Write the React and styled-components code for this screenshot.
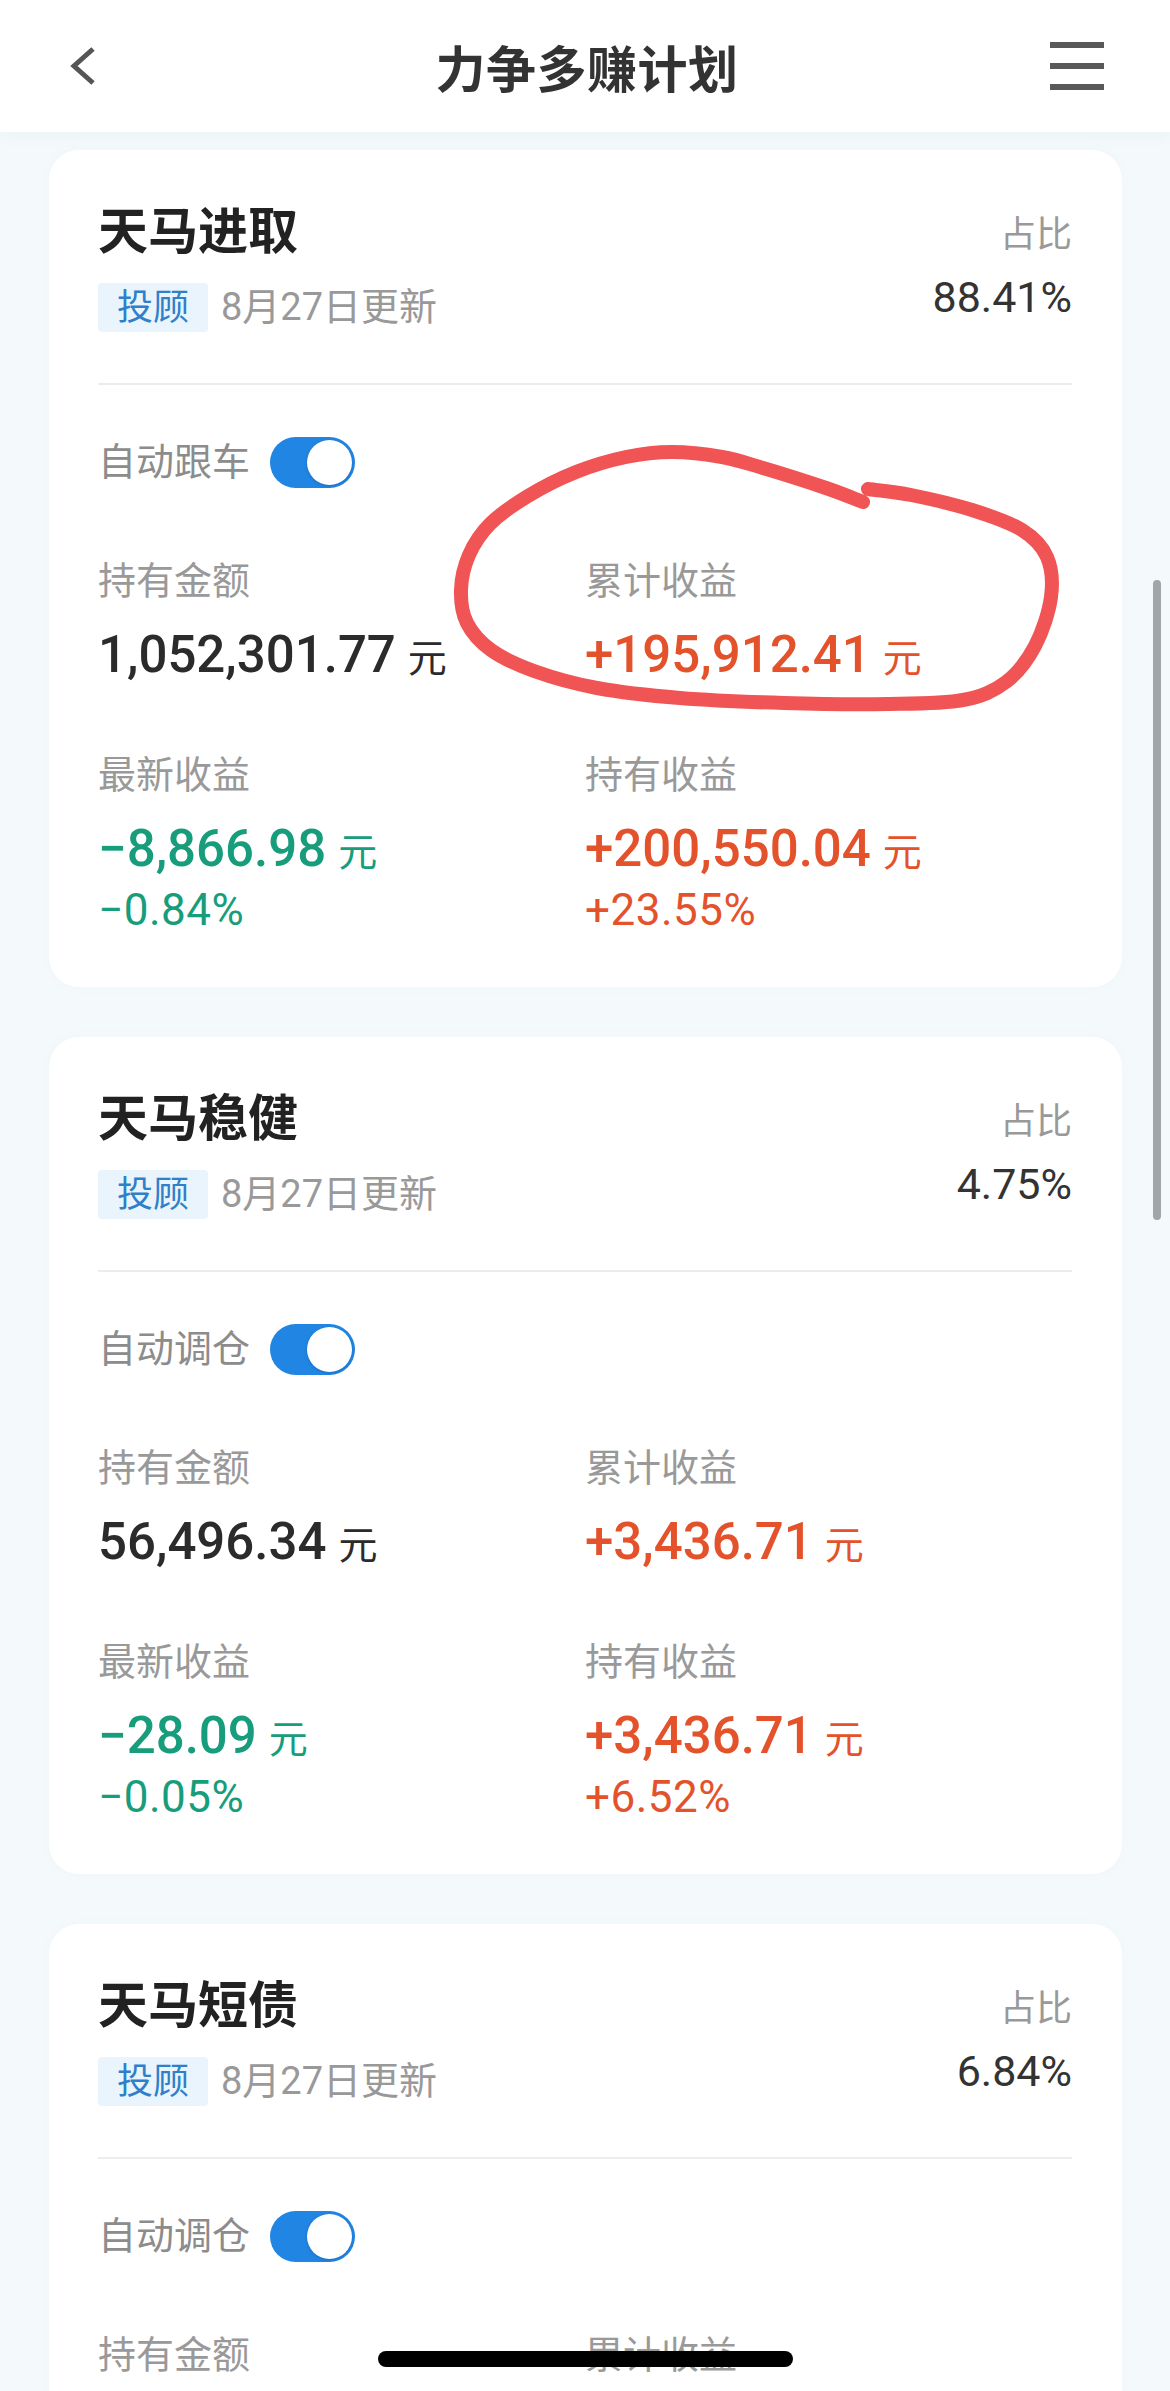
import React from 'react';
import styled, { createGlobalStyle } from 'styled-components';

const FONT = `Roboto, "Noto Sans CJK SC", sans-serif`;

const GlobalStyle = createGlobalStyle`
    html, body {
        margin: 0;
        padding: 0;
        background: #f4f9fb;
        font-family: ${FONT};
        height: 2391px;
        overflow: hidden;
    }
    * { box-sizing: border-box; }
`;

const plans = [
    {
        name: '天马进取',
        ratio: '88.41%',
        toggle: '自动跟车',
        circled: true,
        cells: [
            { label: '持有金额', value: '1,052,301.77' },
            { label: '累计收益', value: '+195,912.41', tone: 'up' },
            { label: '最新收益', value: '−8,866.98', pct: '−0.84%', tone: 'down' },
            { label: '持有收益', value: '+200,550.04', pct: '+23.55%', tone: 'up' },
        ],
    },
    {
        name: '天马稳健',
        ratio: '4.75%',
        toggle: '自动调仓',
        cells: [
            { label: '持有金额', value: '56,496.34' },
            { label: '累计收益', value: '+3,436.71', tone: 'up' },
            { label: '最新收益', value: '−28.09', pct: '−0.05%', tone: 'down' },
            { label: '持有收益', value: '+3,436.71', pct: '+6.52%', tone: 'up' },
        ],
    },
    {
        name: '天马短债',
        ratio: '6.84%',
        toggle: '自动调仓',
        cells: [
            { label: '持有金额', value: '--' },
            { label: '累计收益', value: '--' },
        ],
    },
];

// hand drawn loop around 累计收益, card coordinates
const loopPoints = [
    [814, 352], [777, 338], [714, 318], [673, 307], [623, 302], [577, 307],
    [527, 322], [479, 346], [441, 374], [420, 405], [412, 440], [418, 473],
    [442, 500], [485, 521], [548, 538], [631, 548], [735, 553], [839, 554],
    [914, 550], [957, 532], [986, 496], [1002, 447], [998, 407], [973, 380],
    [923, 360], [862, 345], [819, 339],
];

function smoothPath(pts) {
    let d = `M ${pts[0][0]} ${pts[0][1]}`;
    for (let i = 0; i < pts.length - 1; i++) {
        const p0 = pts[i - 1] || pts[i];
        const p1 = pts[i];
        const p2 = pts[i + 1];
        const p3 = pts[i + 2] || p2;
        const c1x = p1[0] + (p2[0] - p0[0]) / 6;
        const c1y = p1[1] + (p2[1] - p0[1]) / 6;
        const c2x = p2[0] - (p3[0] - p1[0]) / 6;
        const c2y = p2[1] - (p3[1] - p1[1]) / 6;
        d += ` C ${c1x} ${c1y}, ${c2x} ${c2y}, ${p2[0]} ${p2[1]}`;
    }
    return d;
}

function App() {
    return (
        <Page>
            <GlobalStyle />
            <Header>
                <IconSlot>
                    <svg width="30" height="40" viewBox="0 0 30 40">
                        <polyline points="23,3 4,20 23,37" fill="none" stroke="#555" strokeWidth="5" />
                    </svg>
                </IconSlot>
                <HeaderTitle>力争多赚计划</HeaderTitle>
                <IconSlot $right>
                    <svg width="54" height="48" viewBox="0 0 54 48">
                        <rect x="0" y="0" width="54" height="6" fill="#595959" />
                        <rect x="0" y="21" width="54" height="6" fill="#595959" />
                        <rect x="0" y="42" width="54" height="6" fill="#595959" />
                    </svg>
                </IconSlot>
            </Header>
            <List>
                {plans.map((plan) => (
                    <Card key={plan.name}>
                        <CardHead>
                            <div>
                                <PlanName>{plan.name}</PlanName>
                                <Meta>
                                    <Tag>投顾</Tag>
                                    <Updated>8月27日更新</Updated>
                                </Meta>
                            </div>
                            <Share>
                                <ShareLabel>占比</ShareLabel>
                                <ShareValue>{plan.ratio}</ShareValue>
                            </Share>
                        </CardHead>
                        <Divider />
                        <ToggleRow>
                            <ToggleLabel>{plan.toggle}</ToggleLabel>
                            <Switch>
                                <Knob />
                            </Switch>
                        </ToggleRow>
                        <Stats>
                            {plan.cells.map((c) => (
                                <Cell key={c.label}>
                                    <Label>{c.label}</Label>
                                    <Value $tone={c.tone}>
                                        {c.value}
                                        <Unit>元</Unit>
                                    </Value>
                                    {c.pct && <Pct $tone={c.tone}>{c.pct}</Pct>}
                                </Cell>
                            ))}
                        </Stats>
                        {plan.circled && (
                            <Scribble viewBox="0 0 1073 837" preserveAspectRatio="none">
                                <path
                                    d={smoothPath(loopPoints)}
                                    fill="none"
                                    stroke="#f15454"
                                    strokeWidth="14"
                                    strokeLinecap="round"
                                    strokeLinejoin="round"
                                />
                            </Scribble>
                        )}
                    </Card>
                ))}
            </List>
            <ScrollThumb />
            <HomeBar />
        </Page>
    );
}

export default App;

const toneColor = (tone) => (tone === 'up' ? '#e4522b' : tone === 'down' ? '#179d7b' : '#2b2b2b');

const Page = styled.div`
    min-height: 2391px;
    background: #f4f9fb;
`;

const Header = styled.header`
    height: 132px;
    background: #fff;
    display: grid;
    grid-template-columns: 1fr auto 1fr;
    align-items: center;
    padding: 0 66px 0 70px;
    box-shadow: 0 4px 14px rgba(120, 150, 160, 0.06);
`;

const IconSlot = styled.div`
    display: flex;
    justify-content: ${(p) => (p.$right ? 'flex-end' : 'flex-start')};
    align-items: center;
    svg { display: block; }
`;

const HeaderTitle = styled.h1`
    margin: 0;
    font-size: 50px;
    font-weight: 700;
    color: #333;
    letter-spacing: 0.5px;
`;

const List = styled.main`
    display: flex;
    flex-direction: column;
    gap: 50px;
    padding: 18px 48px 0 49px;
`;

const Card = styled.section`
    position: relative;
    background: #fff;
    border-radius: 30px;
    padding: 52px 50px 52px 49px;
    box-shadow: 0 0 10px rgba(150, 180, 190, 0.05);
`;

const CardHead = styled.div`
    display: flex;
    justify-content: space-between;
    align-items: flex-start;
`;

const PlanName = styled.h2`
    margin: 0;
    font-size: 50px;
    line-height: 60px;
    font-weight: 700;
    color: #222;
`;

const Meta = styled.div`
    display: flex;
    align-items: center;
    gap: 13px;
    height: 49px;
    margin-top: 21px;
`;

const Tag = styled.span`
    height: 49px;
    width: 110px;
    display: flex;
    align-items: center;
    justify-content: center;
    background: #e9f4fd;
    color: #2f80c9;
    font-size: 36px;
    line-height: 1;
    border-radius: 4px;
`;

const Updated = styled.span`
    font-size: 38px;
    line-height: 49px;
    color: #999;
`;

const Share = styled.div`
    text-align: right;
`;

const ShareLabel = styled.div`
    font-size: 36px;
    line-height: 50px;
    margin-top: 8px;
    color: #999;
`;

const ShareValue = styled.div`
    font-size: 43px;
    line-height: 50px;
    margin-top: 12px;
    color: #333;
`;

const Divider = styled.hr`
    margin: 51px 0 0;
    border: none;
    height: 2px;
    background: #ececec;
`;

const ToggleRow = styled.div`
    display: flex;
    align-items: center;
    gap: 20px;
    margin-top: 52px;
    height: 51px;
`;

const ToggleLabel = styled.span`
    font-size: 38px;
    line-height: 51px;
    color: #8c8c8c;
`;

const Switch = styled.span`
    position: relative;
    width: 85px;
    height: 51px;
    border-radius: 26px;
    background: #2185e4;
`;

const Knob = styled.span`
    position: absolute;
    top: 3px;
    right: 3px;
    width: 45px;
    height: 45px;
    border-radius: 50%;
    background: #fff;
    box-shadow: 0 1px 3px rgba(0, 40, 90, 0.25);
`;

const Stats = styled.div`
    display: grid;
    grid-template-columns: 1fr 1fr;
    row-gap: 65px;
    margin-top: 68px;
`;

const Cell = styled.div`
    display: flex;
    flex-direction: column;
`;

const Label = styled.div`
    font-size: 38px;
    line-height: 50px;
    color: #999;
`;

const Value = styled.div`
    display: flex;
    align-items: baseline;
    height: 60px;
    margin-top: 19px;
    font-size: 51px;
    line-height: 60px;
    font-weight: 500;
    color: ${(p) => toneColor(p.$tone)};
`;

const Unit = styled.span`
    margin-left: 12px;
    font-size: 39px;
    line-height: 1;
    font-weight: 400;
`;

const Pct = styled.div`
    margin-top: 6px;
    font-size: 44px;
    line-height: 50px;
    letter-spacing: 0.5px;
    color: ${(p) => toneColor(p.$tone)};
`;

const Scribble = styled.svg`
    position: absolute;
    inset: 0;
    width: 100%;
    height: 100%;
    overflow: visible;
    pointer-events: none;
`;

const ScrollThumb = styled.div`
    position: fixed;
    top: 580px;
    right: 9px;
    width: 8px;
    height: 640px;
    border-radius: 4px;
    background: #a1a6a6;
`;

const HomeBar = styled.div`
    position: fixed;
    left: 50%;
    bottom: 24px;
    width: 415px;
    height: 16px;
    margin-left: -207px;
    border-radius: 8px;
    background: #000;
`;
